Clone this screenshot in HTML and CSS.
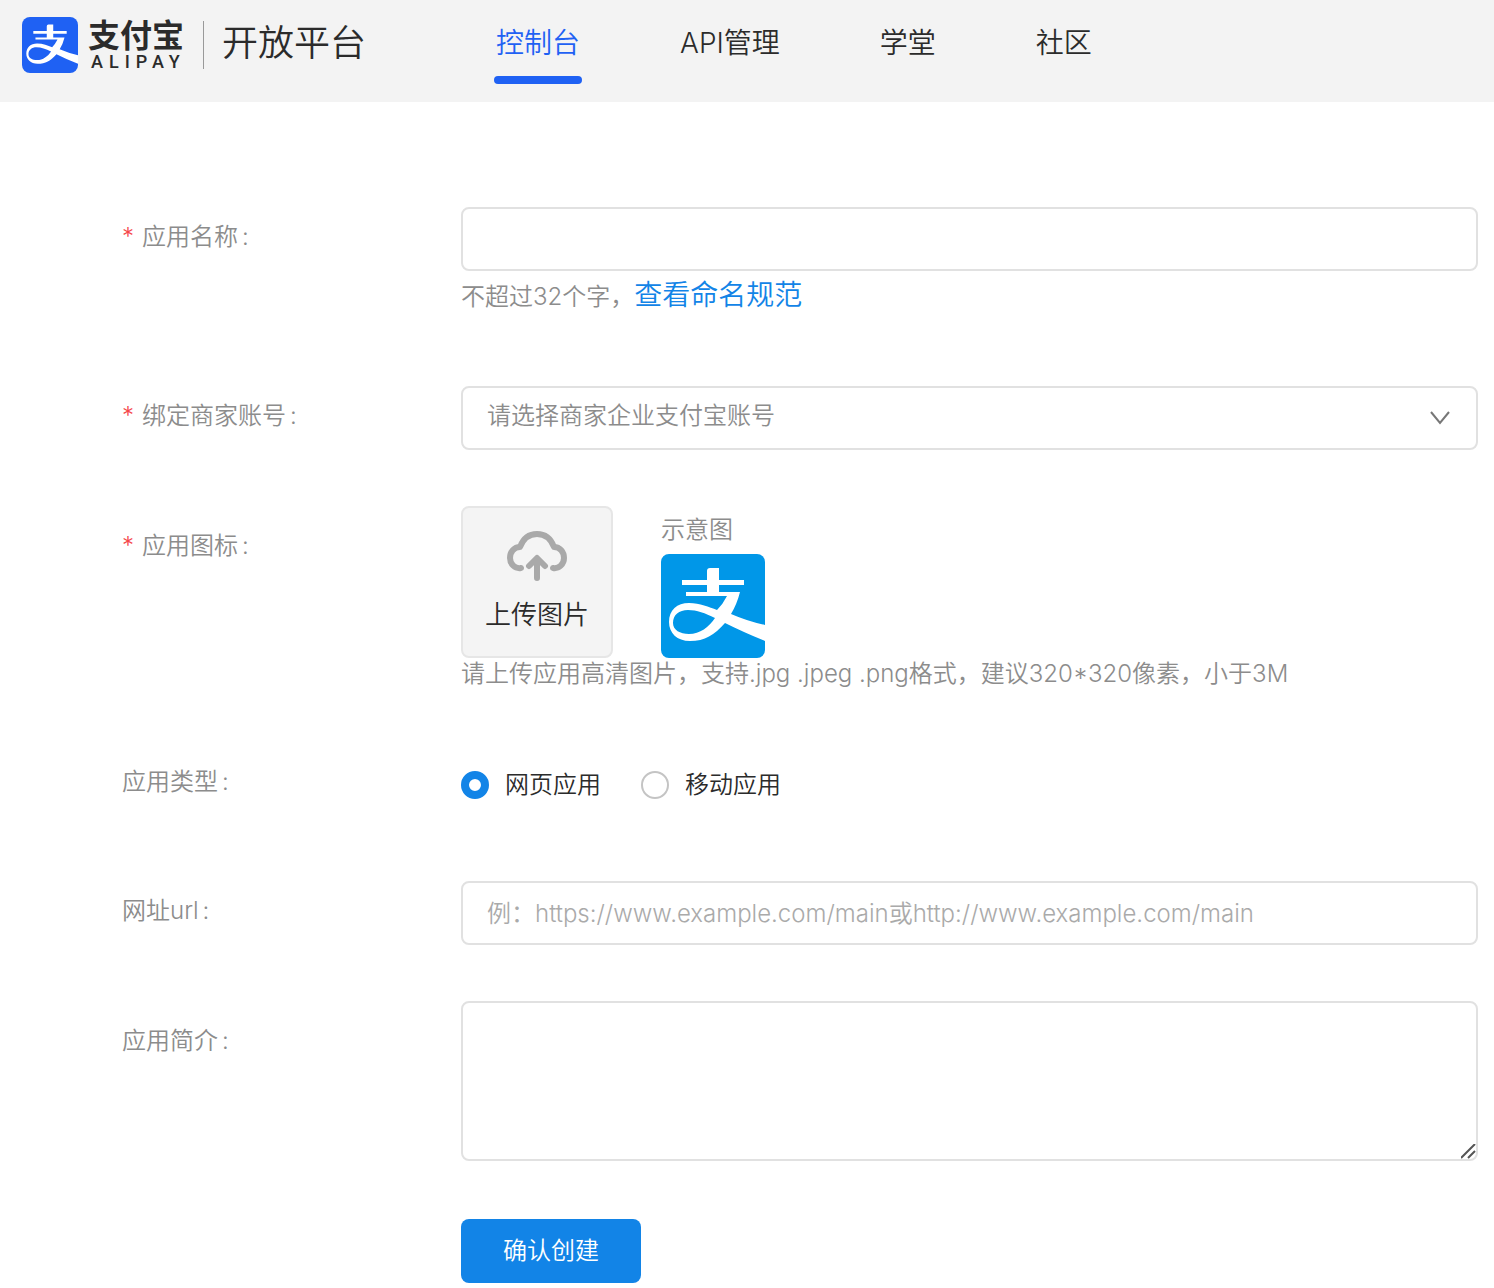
FILE: index.html
```html
<!DOCTYPE html>
<html lang="zh-CN">
<head>
  <meta charset="UTF-8" />
  <meta name="viewport" content="width=device-width, initial-scale=1" />
  <title>创建应用 - 支付宝开放平台</title>
  <link rel="stylesheet" href="styles.css">
</head>
<body>

<svg class="sprite" aria-hidden="true">
  <symbol id="alipay-mark" viewBox="0 0 104 104">
    <path fill="#fff" fill-rule="evenodd" d="M46 26V17Q46 14 49 14H58V26H83V31H58V38H79Q76 50 70 60Q86 67 104 71V87Q82 78 64 69C53 81 44 87 29 87C16 87 8 79 8 68C8 56 16 49 28 49C39 49 48 53 56 56Q62 50 66 42H25V38H46V31H21V26ZM54 64C44 59 36 56 27 56C18 56 12 61 12 69C12 76 19 80 28 80C39 80 48 73 54 64Z"/>
  </symbol>
</svg>

<header>
  <a class="brand" href="#">
    <svg class="brand-mark" role="img" aria-label="支付宝"><use href="#alipay-mark"/></svg>
    <span class="wordmark">
      <span class="wordmark-cn">支付宝</span>
      <span class="wordmark-en">ALIPAY</span>
    </span>
    <span class="platform">开放平台</span>
  </a>
  <nav>
    <a class="active" href="#">控制台</a>
    <a href="#">API管理</a>
    <a href="#">学堂</a>
    <a href="#">社区</a>
  </nav>
</header>

<main>
  <form id="app-form">
    <div class="row">
      <label class="title required" for="app-name">应用名称<span class="colon">:</span></label>
      <div class="control">
        <input class="field" type="text" id="app-name" required />
        <p class="help help-link">不超过32个字，<a href="#">查看命名规范</a></p>
      </div>
    </div>

    <div class="row">
      <label class="title required" for="account">绑定商家账号<span class="colon">:</span></label>
      <div class="control select-box">
        <select class="field" id="account" required>
          <option value="">请选择商家企业支付宝账号</option>
        </select>
        <svg class="arrow" viewBox="0 0 20 14" aria-hidden="true"><path d="M1 1L10 12L19 1" fill="none" stroke="#777" stroke-width="2"/></svg>
      </div>
    </div>

    <div class="row">
      <label class="title tall required" for="upload">应用图标<span class="colon">:</span></label>
      <div class="control">
        <div class="pictures">
          <button class="upload" type="button" id="upload">
            <svg viewBox="0 0 60 50" aria-hidden="true">
              <path d="M14 37C8 38 3 33 3 27C3 21 7 16 13 16C16 8 22 3 30 3S44 8 47 16C53 16 57 21 57 27C57 33 52 38 46 37M30 47V28M22 35L30 27L38 35" fill="none" stroke="#a9a9a9" stroke-width="6" stroke-linecap="round" stroke-linejoin="round"/>
            </svg>
            上传图片
          </button>
          <div class="sample">
            <span>示意图</span>
            <svg class="sample-mark" role="img" aria-label="示意图"><use href="#alipay-mark"/></svg>
          </div>
        </div>
        <p class="help">请上传应用高清图片，支持.jpg .jpeg .png格式，建议320*320像素，小于3M</p>
      </div>
    </div>

    <div class="row" role="radiogroup" aria-labelledby="type-title">
      <span class="title medium" id="type-title">应用类型<span class="colon">:</span></span>
      <div class="control radios">
        <label><input type="radio" name="type" value="web" checked />网页应用</label>
        <label><input type="radio" name="type" value="mobile" />移动应用</label>
      </div>
    </div>

    <div class="row">
      <label class="title" for="url">网址url<span class="colon">:</span></label>
      <div class="control">
        <input class="field" type="text" id="url" placeholder="例：https://www.example.com/main或http://www.example.com/main" />
      </div>
    </div>

    <div class="row">
      <label class="title tall" for="intro">应用简介<span class="colon">:</span></label>
      <div class="control">
        <textarea class="field" id="intro"></textarea>
      </div>
    </div>

    <div class="row">
      <div class="control submit-box">
        <button class="submit" type="submit">确认创建</button>
      </div>
    </div>
  </form>
</main>

</body>
</html>
```
FILE: styles.css
```css
* {
  box-sizing: border-box;
}
body {
  margin: 0;
  font-family: 'Inter', 'Noto Sans CJK SC', sans-serif;
  font-size: 24px;
  font-weight: 350;
  line-height: 32px;
  color: #2b2b2b;
  background-color: #fff;
}
a {
  text-decoration: none;
}
input, select, textarea, button {
  font: inherit;
}
.sprite {
  position: absolute;
  width: 0;
  height: 0;
}

/* header */
header {
  display: flex;
  gap: 128px;
  height: 102px;
  padding: 0 22px;
  background-color: #f3f3f3;
}
.brand {
  display: flex;
  align-items: center;
  height: 90px;
  color: #2b2b2b;
}
.brand-mark {
  width: 56px;
  height: 56px;
  border-radius: 8px;
  background-color: #1f61f3;
}
.wordmark {
  display: flex;
  flex-direction: column;
  width: 97px;
  margin-left: 10px;
  font-weight: 700;
}
.wordmark-cn {
  font-family: 'Noto Sans CJK SC', sans-serif;
  font-size: 32px;
  line-height: 34px;
}
.wordmark-en {
  padding-left: 3px;
  font-family: 'Roboto', sans-serif;
  font-size: 18px;
  font-weight: 500;
  line-height: 24px;
  letter-spacing: 6px;
}
.platform {
  margin-left: 18px;
  padding: 0 0 4px 18px;
  border-left: 1px solid #999;
  font-size: 36px;
  line-height: 44px;
}
nav {
  display: flex;
  gap: 96px;
}
nav a {
  height: 84px;
  padding: 23px 2px 0;
  font-size: 28px;
  line-height: 40px;
  color: #2b2b2b;
  white-space: nowrap;
}
nav .active {
  color: #1f61f3;
}
nav .active::after {
  content: '';
  display: block;
  height: 8px;
  margin: 13px -2px 0;
  border-radius: 4px;
  background-color: #1f61f3;
}

/* form */
main {
  padding: 105px 16px 5px 122px;
}
form {
  display: flex;
  flex-direction: column;
  gap: 56px;
}
.row {
  display: grid;
  grid-template-columns: 339px 1fr;
}
.title {
  line-height: 60px;
  color: #8c8c8c;
}
.title.medium {
  line-height: 72px;
}
.title.tall {
  line-height: 80px;
}
.required::before {
  content: '*';
  margin-right: 8px;
  color: #f5474b;
}
.colon {
  margin-left: 4px;
}
.field {
  display: block;
  width: 100%;
  height: 64px;
  padding: 0 24px;
  border: 2px solid #e1e1e1;
  border-radius: 8px;
  background-color: #fff;
  color: #2b2b2b;
  outline: none;
}
.field:focus {
  border-color: #1284e7;
}
.field::placeholder {
  color: #aaa;
  opacity: 1;
}
select.field {
  appearance: none;
  padding-bottom: 4px;
  color: #8c8c8c;
}
.select-box {
  position: relative;
}
.arrow {
  position: absolute;
  top: 25px;
  right: 28px;
  width: 20px;
  height: 14px;
  pointer-events: none;
}
textarea.field {
  height: 160px;
  padding: 12px 24px;
  resize: vertical;
}
textarea::-webkit-resizer {
  background: url("data:image/svg+xml,%3Csvg xmlns='http://www.w3.org/2000/svg' width='15' height='15'%3E%3Cpath d='M0 14L14 0M7 14L14 7' stroke='%23555' stroke-width='2'/%3E%3C/svg%3E") no-repeat;
}
.help {
  margin: 0;
  color: #8c8c8c;
}
.help-link {
  padding: 4px 0 13px;
  line-height: 40px;
}
.help a {
  font-size: 28px;
  color: #1284e7;
}
.pictures {
  display: flex;
  gap: 48px;
}
.upload {
  display: flex;
  flex-direction: column;
  align-items: center;
  gap: 18px;
  width: 152px;
  height: 152px;
  padding: 23px 0 0;
  border: 2px solid #e6e6e6;
  border-radius: 8px;
  background-color: #f4f4f4;
  color: #2b2b2b;
  font-size: 26px;
  cursor: pointer;
}
.upload svg {
  width: 60px;
  height: 50px;
}
.sample {
  display: flex;
  flex-direction: column;
  justify-content: flex-end;
  gap: 8px;
  color: #8c8c8c;
}
.sample-mark {
  width: 104px;
  height: 104px;
  border-radius: 8px;
  background-color: #0097e8;
}
.radios {
  display: flex;
  align-items: center;
  gap: 40px;
  min-height: 79px;
  padding-bottom: 2px;
}
.radios label {
  display: flex;
  align-items: center;
  gap: 16px;
  cursor: pointer;
}
.radios input {
  appearance: none;
  width: 28px;
  height: 28px;
  margin: 0;
  border: 2px solid #c4c4c4;
  border-radius: 50%;
  background-color: #fff;
}
.radios input:checked {
  border: 8px solid #1284e7;
}
.submit-box {
  grid-column: 2;
  padding-top: 2px;
}
.submit {
  height: 64px;
  padding: 0 42px;
  border: none;
  border-radius: 8px;
  background-color: #1284e7;
  color: #fff;
  cursor: pointer;
}
.submit:hover {
  background-color: #0f74cc;
}
```
